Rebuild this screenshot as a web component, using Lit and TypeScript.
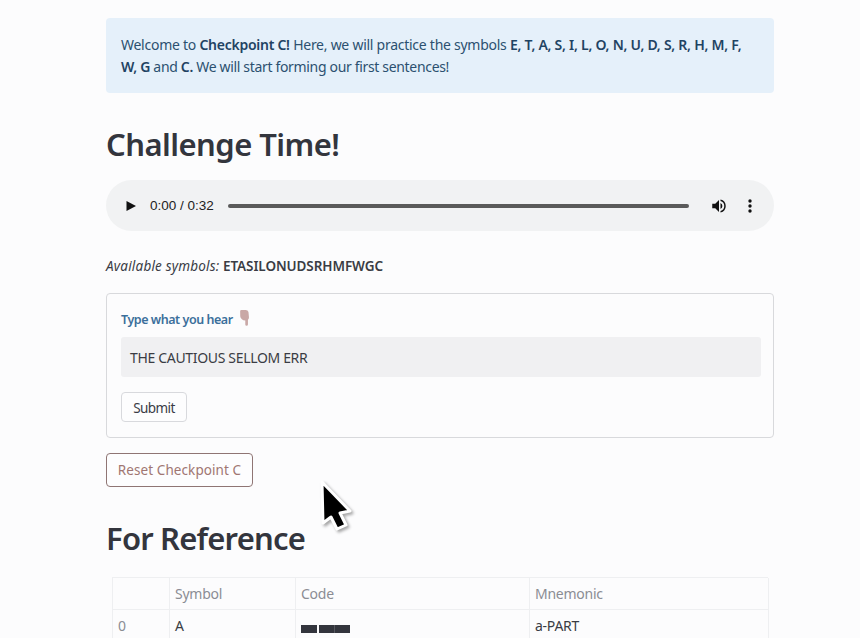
import { LitElement, html, css } from "lit";
import { customElement } from "lit/decorators.js";

@customElement("app-root")
export class AppRoot extends LitElement {
  static styles = css`
    :host { display: block; height: 638px; overflow: hidden; position: relative; background: #fcfcfd; color: #3a3c44; font-family: "Noto Sans", "Open Sans", sans-serif; font-size: 14px; }
    .page { width: 668px; margin-left: 106px; padding-top: 18px; }
    .alert { background: #e5f0fa; border-radius: 4px; padding: 16px 15px 15px; height: 75px; box-sizing: border-box; color: #2c5070; font-size: 14px; line-height: 22px; letter-spacing: -0.26px; white-space: nowrap; }
    .alert b { font-weight: 600; color: #1f4363; }
    .tight { letter-spacing: -0.33px; }
    h2 { font-weight: 600; font-size: 31px; line-height: 40px; margin: 0; color: #33353d; }
    .h1 { margin-top: 31px; letter-spacing: -0.55px; }
    .audio { margin-top: 16px; height: 51px; border-radius: 26px; background: #f1f2f3; display: flex; align-items: center; padding: 0 19px; box-sizing: border-box; }
    .play { width: 12px; height: 12px; margin-right: 13px; flex: none; }
    .time { font-family: "Liberation Sans", sans-serif; font-size: 13.5px; color: #222; white-space: nowrap; }
    .track { flex: 1; height: 4px; border-radius: 2px; background: #5a5a5a; margin: 0 21px 0 14px; }
    .vol { width: 18px; height: 18px; flex: none; margin-right: 20px; }
    .dots { width: 4px; height: 14px; flex: none; margin-right: 3px; }
    .avail { margin-top: 25px; line-height: 20px; font-size: 13.5px; white-space: nowrap; }
    .avail i { color: #3a3c46; letter-spacing: 0.2px; }
    .avail b { font-weight: 600; letter-spacing: -0.08px; }
    .form { margin-top: 17px; height: 145px; box-sizing: border-box; border: 1px solid #d8d9dc; border-radius: 4px; padding: 13px 12px 0 14px; }
    .label { display: flex; align-items: center; height: 24px; font-size: 12.5px; font-weight: 600; color: #3b6f9b; letter-spacing: -0.46px; gap: 5px; }
    .hand { width: 12px; height: 20px; flex: none; margin-top: -2px; }
    .input { margin-top: 6px; height: 40px; background: #f0f0f2; border-radius: 3px; display: flex; align-items: center; padding: 0 9px; font-size: 14px; letter-spacing: -0.33px; color: #3a3c44; }
    .btn { background: #fdfdfe; border-radius: 4px; box-sizing: border-box; display: flex; align-items: center; justify-content: center; font-size: 13.5px; white-space: nowrap; }
    .submit { margin-top: 15px; width: 66px; height: 30px; padding-top: 2px; border: 1px solid #d8d9dd; color: #3a3c46; letter-spacing: -0.6px; }
    .reset { margin-top: 15px; width: 147px; height: 34px; border: 1px solid #8f7574; color: #a07672; letter-spacing: 0.08px; }
    .h2b { margin-top: 31px; letter-spacing: -0.8px; }
    .table { margin: 19px 6px 0; display: grid; grid-template-columns: 57px 126px 234px 239px; border-top: 1px solid #eeeff1; border-left: 1px solid #eeeff1; font-size: 14px; letter-spacing: -0.25px; }
    .c { height: 32px; box-sizing: border-box; border-right: 1px solid #eeeff1; border-bottom: 1px solid #eeeff1; display: flex; align-items: center; padding-left: 5px; }
    .hd { color: #8b8d94; }
    .idx { color: #8b8d94; }
    .code { display: flex; gap: 2px; align-items: center; padding-top: 6px; }
    .dash { height: 8px; background: #33353d; width: 16px; }
    .dash.long { width: 31px; background: linear-gradient(90deg, #33353d 48%, #55575e 48% 52%, #33353d 52%); }
    .cursor { position: absolute; left: 315px; top: 476px; width: 44px; height: 60px; }
  `;

  render() {
    return html`<div class="page">
        <div class="alert">
          Welcome to <b>Checkpoint C!</b> Here, we will practice the symbols <b>E, T, A, S, I, L, O, N, U, D, S, R, H, M, F,</b><br />
          <span class="tight"><b>W, G</b> and <b>C.</b> We will start forming our first sentences!</span>
        </div>
        <h2 class="h1">Challenge Time!</h2>
        <div class="audio">
          <svg class="play" viewBox="0 0 12 12"><path d="M1.5 1 L11 6 L1.5 11 Z" fill="#111" /></svg>
          <span class="time">0:00 / 0:32</span>
          <div class="track"></div>
          <svg class="vol" viewBox="0 0 24 24"><path fill="#111" d="M3 9v6h4l5 5V4L7 9H3zm13.5 3A4.5 4.5 0 0 0 14 7.97v8.05A4.5 4.5 0 0 0 16.5 12zM14 3.23v2.06a7 7 0 0 1 0 13.42v2.06a9 9 0 0 0 0-17.54z" /></svg>
          <svg class="dots" viewBox="0 0 4 14"><circle cx="2" cy="2" r="1.7" fill="#111" /><circle cx="2" cy="7" r="1.7" fill="#111" /><circle cx="2" cy="12" r="1.7" fill="#111" /></svg>
        </div>
        <div class="avail"><i>Available symbols:</i> <b>ETASILONUDSRHMFWGC</b></div>
        <div class="form">
          <div class="label">
            Type what you hear
            <svg class="hand" viewBox="0 0 14 20"><path fill="#c9a8a6" d="M2.5 2 Q2.5 .6 4 .6 H9 Q11.6 .6 12.2 3 L12.8 9 Q12.8 11 11.6 12 V17.5 Q11.6 19 10 19 Q8.5 19 8.5 17.5 V13 Q6 13 4.5 11.5 Q2.6 10 2.6 8 Z" /></svg>
          </div>
          <div class="input">THE CAUTIOUS SELLOM ERR</div>
          <div class="btn submit">Submit</div>
        </div>
        <div class="btn reset">Reset Checkpoint C</div>
        <h2 class="h2b">For Reference</h2>
        <div class="table">
          <div class="c hd"></div>
          <div class="c hd">Symbol</div>
          <div class="c hd">Code</div>
          <div class="c hd">Mnemonic</div>
          <div class="c idx">0</div>
          <div class="c">A</div>
          <div class="c code"><span class="dash"></span><span class="dash long"></span></div>
          <div class="c">a-PART</div>
        </div>
      </div>
      <svg class="cursor" viewBox="0 0 44 60">
        <path d="M7 6 L35 35 L25 37 L31 49 L22 53 L16 41 L8 47 Z" fill="#000" stroke="#fff" stroke-width="3" stroke-linejoin="round" style="filter: drop-shadow(2px 2px 1.5px rgba(0,0,0,.35))" />
      </svg>`;
  }
}
